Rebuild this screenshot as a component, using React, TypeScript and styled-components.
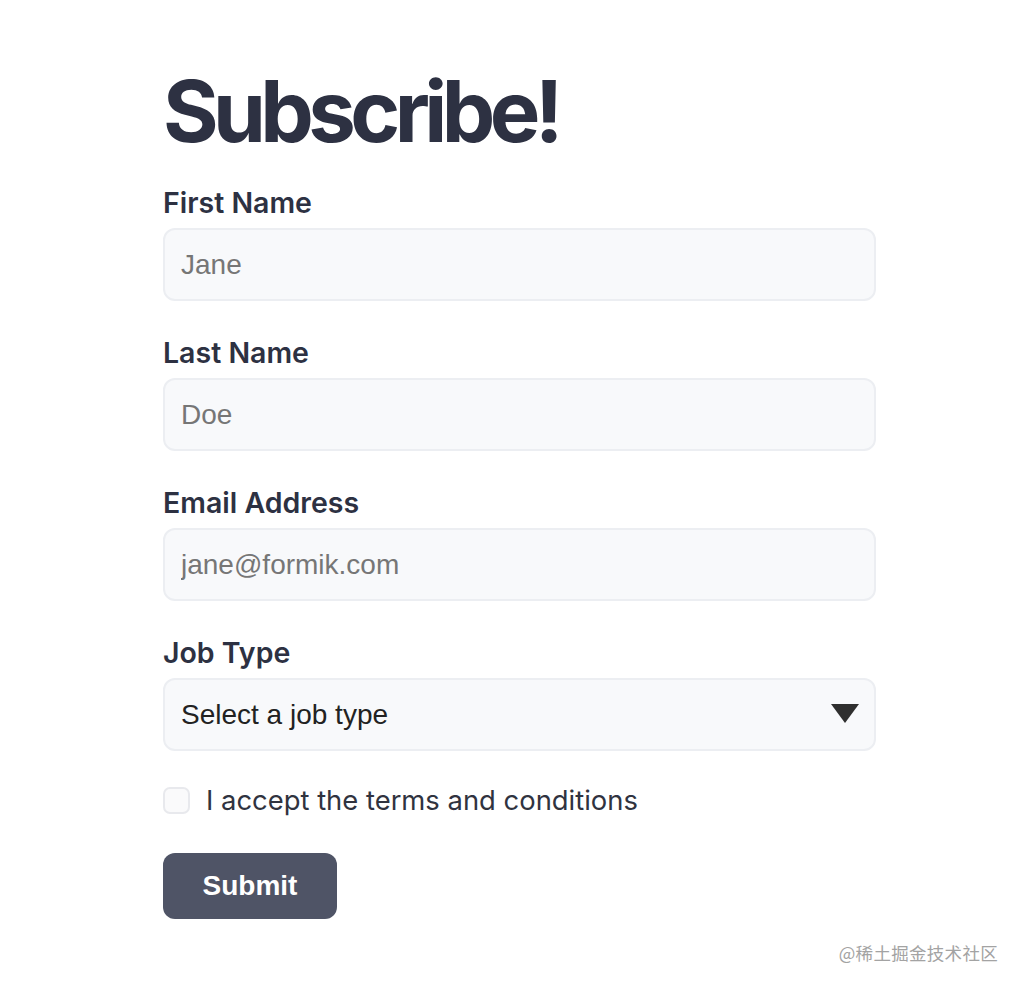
import React from "react";
import styled, { createGlobalStyle } from "styled-components";

const GlobalStyle = createGlobalStyle`
  html, body {
    margin: 0;
    padding: 0;
    background: #ffffff;
  }
  body {
    font-family: "Liberation Sans", Arial, sans-serif;
  }
`;

const Page = styled.div`
  position: relative;
  min-height: 988px;
  padding: 68px 0 0 163px;
  box-sizing: border-box;
`;

const Heading = styled.h1`
  margin: 0 0 30px;
  font-family: Inter, "Noto Sans", sans-serif;
  font-size: 85px;
  line-height: 88px;
  font-weight: 700;
  letter-spacing: -0.066em;
  color: #2d3142;
`;

const Form = styled.form`
  width: 713px;
  display: flex;
  flex-direction: column;
`;

const Field = styled.div`
  display: flex;
  flex-direction: column;
  gap: 8px;
  margin-bottom: 35px;
`;

const Label = styled.label`
  font-family: Inter, "Noto Sans", sans-serif;
  font-size: 28.5px;
  line-height: 34px;
  font-weight: 600;
  color: #2d3142;
`;

const fieldBox = `
  width: 100%;
  height: 73px;
  box-sizing: border-box;
  padding: 0 16px;
  border: 2px solid #eceef2;
  border-radius: 12px;
  background: #f8f9fb;
  font-family: "Liberation Sans", Arial, sans-serif;
  font-size: 28px;
  outline: none;
`;

const Input = styled.input`
  ${fieldBox}
  color: #333333;
  &::placeholder {
    color: #767676;
  }
`;

const SelectWrap = styled.div`
  position: relative;
`;

const Select = styled.select`
  ${fieldBox}
  appearance: none;
  color: #222222;
`;

const Arrow = styled.svg`
  position: absolute;
  right: 17px;
  top: 26px;
  pointer-events: none;
`;

const CheckRow = styled.label`
  display: flex;
  align-items: center;
  gap: 16px;
  margin: -2px 0 37px;
  font-family: Inter, "Noto Sans", sans-serif;
  font-size: 27.4px;
  line-height: 32px;
  color: #30333f;
`;

const Checkbox = styled.input`
  appearance: none;
  margin: 0;
  width: 27px;
  height: 27px;
  box-sizing: border-box;
  border: 2px solid #e8e9ed;
  border-radius: 7px;
  background: #fafafb;
`;

const SubmitButton = styled.button`
  align-self: flex-start;
  width: 174px;
  height: 66px;
  border: none;
  border-radius: 12px;
  background: #4f5466;
  color: #ffffff;
  font-family: "Liberation Sans", Arial, sans-serif;
  font-size: 28px;
  font-weight: 700;
`;

const Watermark = styled.div`
  position: absolute;
  right: 26px;
  top: 940px;
  font-family: "Noto Sans CJK SC", sans-serif;
  font-size: 17.5px;
  color: #a3a3a3;
  letter-spacing: 0.3px;
`;

const fields = [
  { id: "firstName", label: "First Name", placeholder: "Jane", type: "text" },
  { id: "lastName", label: "Last Name", placeholder: "Doe", type: "text" },
  { id: "email", label: "Email Address", placeholder: "jane@formik.com", type: "email" },
];

export default function App() {
  return (
    <Page>
      <GlobalStyle />
      <Heading>Subscribe!</Heading>
      <Form onSubmit={(e) => e.preventDefault()}>
        {fields.map((f) => (
          <Field key={f.id}>
            <Label htmlFor={f.id}>{f.label}</Label>
            <Input id={f.id} type={f.type} placeholder={f.placeholder} />
          </Field>
        ))}
        <Field>
          <Label htmlFor="jobType">Job Type</Label>
          <SelectWrap>
            <Select id="jobType" defaultValue="">
              <option value="">Select a job type</option>
              <option value="designer">Designer</option>
              <option value="development">Developer</option>
              <option value="product">Product Manager</option>
              <option value="other">Other</option>
            </Select>
            <Arrow width="28" height="19" viewBox="0 0 28 19">
              <path d="M0 0 H28 L14 19 Z" fill="#2f2f2f" />
            </Arrow>
          </SelectWrap>
        </Field>
        <CheckRow>
          <Checkbox type="checkbox" />
          I accept the terms and conditions
        </CheckRow>
        <SubmitButton type="submit">Submit</SubmitButton>
      </Form>
      <Watermark>@稀土掘金技术社区</Watermark>
    </Page>
  );
}
